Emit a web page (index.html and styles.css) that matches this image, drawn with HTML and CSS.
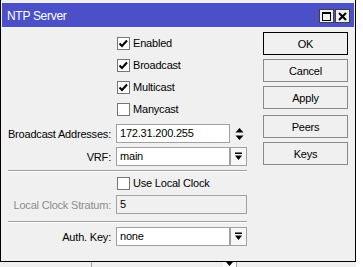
FILE: index.html
```html
<!DOCTYPE html>
<html>
<head>
<meta charset="utf-8">
<link rel="stylesheet" href="styles.css">
</head>
<body>
<div class="win">
  <div class="titlebar">
    <span class="title">NTP Server</span>
    <div class="tbtns">
      <span class="tbtn"><span class="maxico"></span></span>
      <span class="tbtn"><svg width="9" height="9" viewBox="0 0 9 9"><path d="M1 1L8 8M8 1L1 8" stroke="#000" stroke-width="2"/></svg></span>
    </div>
  </div>
  <div class="content">
    <div class="form">
      <div class="row cbrow"><span class="lbl"></span><label class="cb"><span class="box"><svg width="11" height="11" viewBox="0 0 11 11"><path d="M1.5 5.5L4 8L9 2.5" fill="none" stroke="#000" stroke-width="2"/></svg></span>Enabled</label></div>
      <div class="row cbrow"><span class="lbl"></span><label class="cb"><span class="box"><svg width="11" height="11" viewBox="0 0 11 11"><path d="M1.5 5.5L4 8L9 2.5" fill="none" stroke="#000" stroke-width="2"/></svg></span>Broadcast</label></div>
      <div class="row cbrow"><span class="lbl"></span><label class="cb"><span class="box"><svg width="11" height="11" viewBox="0 0 11 11"><path d="M1.5 5.5L4 8L9 2.5" fill="none" stroke="#000" stroke-width="2"/></svg></span>Multicast</label></div>
      <div class="row cbrow"><span class="lbl"></span><label class="cb"><span class="box"></span>Manycast</label></div>

      <div class="row frow first"><span class="lbl">Broadcast Addresses:</span>
        <div class="field"><span class="inp short">172.31.200.255</span><span class="spin"><svg width="9" height="14" viewBox="0 0 9 14"><path d="M4.5 1L8.5 5.5H0.5Z M4.5 13L8.5 8.5H0.5Z" fill="#000"/></svg></span></div>
      </div>
      <div class="row frow"><span class="lbl">VRF:</span>
        <div class="field"><span class="inp short">main</span><span class="dd"><svg width="9" height="9" viewBox="0 0 9 9"><path d="M1 0.5H8V2H1Z M1 3.5H8L4.5 8Z" fill="#000"/></svg></span></div>
      </div>
      <div class="sep"></div>
      <div class="row cbrow"><span class="lbl"></span><label class="cb"><span class="box"></span>Use Local Clock</label></div>
      <div class="row frow tight"><span class="lbl dis">Local Clock Stratum:</span>
        <div class="field"><span class="inp full disabled">5</span></div>
      </div>
      <div class="sep sep2"></div>
      <div class="row frow"><span class="lbl">Auth. Key:</span>
        <div class="field"><span class="inp short">none</span><span class="dd"><svg width="9" height="9" viewBox="0 0 9 9"><path d="M1 0.5H8V2H1Z M1 3.5H8L4.5 8Z" fill="#000"/></svg></span></div>
      </div>
    </div>
    <div class="btns">
      <span class="btn default">OK</span>
      <span class="btn">Cancel</span>
      <span class="btn">Apply</span>
      <span class="btn gapbtn">Peers</span>
      <span class="btn">Keys</span>
    </div>
  </div>
</div>
<div class="under">
  <span class="uline"></span>
  <span class="ubtn"><svg width="9" height="5" viewBox="0 0 9 5"><path d="M1 0H8L4.5 4Z" fill="#000"/></svg></span>
</div>
</body>
</html>
```
FILE: styles.css
```css
* { box-sizing: border-box; }
html, body { margin: 0; padding: 0; }
body {
  width: 363px;
  height: 267px;
  overflow: hidden;
  background: #fff;
  font-family: "Liberation Sans", Arial, sans-serif;
  font-size: 11px;
  letter-spacing: -0.2px;
  color: #000;
}
.win {
  width: 356px;
  height: 262px;
  background: #f0f0f0;
  border: 1px solid #000;
  border-top: none;
  padding: 3px 1px 0;
  display: flex;
  flex-direction: column;
}
.titlebar {
  height: 24px;
  background: #4c50c8;
  display: flex;
  align-items: center;
  justify-content: space-between;
  padding: 0 4px 0 5px;
  flex: none;
}
.title { color: #fff; font-size: 12px; letter-spacing: -0.3px; padding-top: 1px; }
.tbtns { display: flex; gap: 1px; padding-top: 2px; }
.tbtn {
  width: 15px;
  height: 14px;
  background: #f0f0f0;
  border: 1px solid #404040;
  display: flex;
  align-items: center;
  justify-content: center;
}
.maxico { width: 9px; height: 9px; border: 1px solid #000; border-top-width: 2px; }
.content { display: flex; flex: 1; padding-top: 5px; }
.form { width: 245px; display: flex; flex-direction: column; }
.row {
  display: grid;
  grid-template-columns: 111px 131px;
  column-gap: 3px;
  align-items: center;
}
.cbrow { height: 22px; }
.frow { height: 19px; margin-top: 4px; }
.frow.first { margin-top: 4px; }
.frow.tight { margin-top: 1px; }
.lbl { text-align: right; padding-right: 2px; white-space: nowrap; }
.lbl.dis { color: #8c8c8c; }
.cb { display: flex; align-items: center; gap: 3px; padding-left: 1px; }
.box {
  width: 13px;
  height: 13px;
  background: #fff;
  border: 1px solid #767676;
  display: flex;
  align-items: center;
  justify-content: center;
}
.field { display: flex; height: 19px; }
.inp {
  height: 19px;
  background: #fff;
  border: 1px solid #a0a0a0;
  padding: 0 3px;
  line-height: 17px;
  white-space: nowrap;
}
.inp.short { width: 114px; }
.inp.full { width: 131px; }
.inp.disabled { background: #f0f0f0; }
.spin { width: 17px; display: flex; align-items: center; justify-content: center; padding-left: 2px; }
.dd {
  width: 17px;
  height: 19px;
  background: #f7f7f7;
  border: 1px solid #a0a0a0;
  display: flex;
  align-items: center;
  justify-content: center;
}
.sep {
  margin: 4px 0 0 6px;
  height: 2px;
  width: 239px;
  border-top: 1px solid #a0a0a0;
  border-bottom: 1px solid #fff;
}
.sep2 { margin-top: 7px; margin-bottom: 0; }
.btns {
  margin-left: 16px;
  padding-top: 0;
  width: 85px;
  display: flex;
  flex-direction: column;
  gap: 4px;
}
.btn {
  height: 23px;
  border: 1px solid #8a8a8a;
  background: #f0f0f0;
  display: flex;
  align-items: center;
  justify-content: center;
}
.btn.default { border-color: #000; }
.btn.gapbtn { margin-top: 2px; }
.under {
  width: 356px;
  height: 5px;
  background: #f0f0f0;
  display: flex;
}
.uline { margin-left: 91px; width: 1px; height: 5px; background: #a0a0a0; }
.ubtn {
  margin-left: 131px;
  width: 14px;
  height: 5px;
  background: #fff;
  border-right: 1px solid #a0a0a0;
  display: flex;
  justify-content: center;
}
```
